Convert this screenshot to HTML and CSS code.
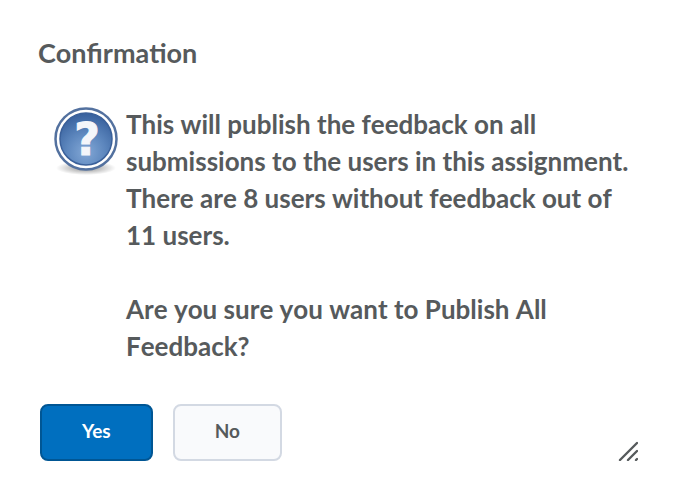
FILE: index.html
```html
<!DOCTYPE html>
<html lang="en">
<head>
    <meta charset="UTF-8">
    <meta name="viewport" content="width=device-width, initial-scale=1.0">
    <title>Confirmation</title>
    <link rel="stylesheet" href="styles.css">
</head>
<body>
    <div class="dialog" role="dialog" aria-labelledby="dialog-title" aria-describedby="dialog-message">
        <h1 class="dialog-title" id="dialog-title">Confirmation</h1>

        <div class="dialog-body">
            <svg class="dialog-icon" viewBox="0 0 66 70" aria-hidden="true">
                <defs>
                    <radialGradient id="disc" cx="0.5" cy="0.75" r="0.75">
                        <stop offset="0" stop-color="#83a8d6"/>
                        <stop offset="0.5" stop-color="#5c86bd"/>
                        <stop offset="1" stop-color="#365f9c"/>
                    </radialGradient>
                    <radialGradient id="shadow">
                        <stop offset="0" stop-color="#000" stop-opacity="0.45"/>
                        <stop offset="1" stop-color="#000" stop-opacity="0"/>
                    </radialGradient>
                </defs>
                <ellipse cx="33" cy="62" rx="30" ry="7" fill="url(#shadow)"/>
                <circle cx="33" cy="33" r="30.5" fill="#fff" stroke="#53719f" stroke-width="2.5"/>
                <circle cx="33" cy="33" r="26" fill="url(#disc)" stroke="#3a609a" stroke-width="1.5"/>
                <text class="icon-mark" x="34" y="49" text-anchor="middle">?</text>
            </svg>
            <div class="dialog-message" id="dialog-message">
                <p>This will publish the feedback on all submissions to the users in this assignment. There are 8 users without feedback out of 11 users.</p>
                <p>Are you sure you want to Publish All Feedback?</p>
            </div>
        </div>

        <div class="dialog-footer">
            <button type="button" class="btn btn-primary">Yes</button>
            <button type="button" class="btn">No</button>
            <svg class="resize-handle" viewBox="0 0 20 20" aria-hidden="true">
                <path d="M2 19L19 2M10 19L19 10M18 19L19 18" fill="none" stroke="#565a5c" stroke-width="2.4" stroke-linecap="round"/>
            </svg>
        </div>
    </div>
</body>
</html>
```

FILE: styles.css
```css
body {
    margin: 0;
    background-color: #fff;
    color: #565a5c;
    font-family: Lato, sans-serif;
    font-kerning: none;
}
.dialog {
    padding: 35px 38px 24px;
}
.dialog-title {
    margin: 0;
    font-size: 27px;
    line-height: 36px;
}
.dialog-body {
    display: flex;
    gap: 7px;
    margin-top: 35px;
    padding-left: 15px;
}
.dialog-icon {
    flex: none;
    width: 66px;
    height: 70px;
}
.icon-mark {
    fill: #f4f6fa;
    stroke: #f4f6fa;
    stroke-width: 1px;
    font-family: "DejaVu Sans", sans-serif;
    font-size: 44px;
    font-weight: bold;
}
.dialog-message {
    font-size: 26px;
    font-weight: bold;
    line-height: 37px;
}
.dialog-message p {
    margin: 0 0 37px;
}
.dialog-message p:last-child {
    margin-bottom: 0;
}
.dialog-footer {
    display: flex;
    align-items: flex-end;
    gap: 20px;
    margin-top: 39px;
    padding-left: 2px;
}
.btn {
    box-sizing: border-box;
    height: 57px;
    padding: 0 40px 4px;
    border: 2px solid #d3d9e3;
    border-radius: 8px;
    background-color: #f9fafc;
    color: #565a5c;
    font-family: inherit;
    font-size: 19px;
    font-weight: bold;
    line-height: 28px;
}
.btn-primary {
    border-color: #005694;
    background-color: #006fbf;
    color: #fff;
}
.resize-handle {
    width: 20px;
    height: 20px;
    margin-left: auto;
}
```
